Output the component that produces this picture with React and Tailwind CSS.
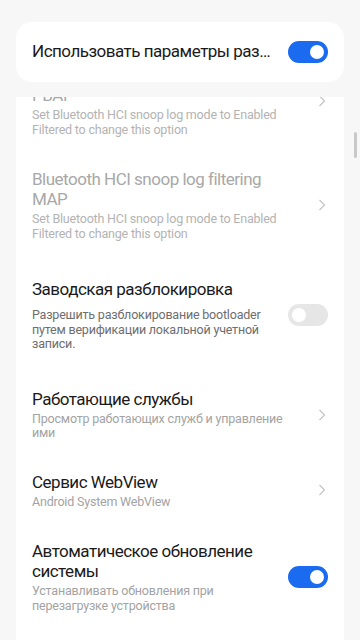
const font = { fontFamily: "Roboto, 'Noto Sans', sans-serif" };

const Chevron = () => (
  <svg width="8" height="12" viewBox="0 0 8 12" className="shrink-0 mr-[2px]">
    <path d="M1.5 1 L6.5 6 L1.5 11" fill="none" stroke="#c4c4c4" strokeWidth="1.2" />
  </svg>
);

const Toggle = ({ on }) => (
  <div
    className={
      "w-10 h-[22px] rounded-full shrink-0 flex items-center px-[4px] " +
      (on ? "bg-[#1a6bf0] justify-end" : "bg-[#e6e6e6] justify-start")
    }
  >
    <div className="w-[14px] h-[14px] rounded-full bg-white" />
  </div>
);

const items = [
  {
    title: "Bluetooth HCI snoop log filtering PBAP",
    sub: "Set Bluetooth HCI snoop log mode to Enabled Filtered to change this option",
    disabled: true,
    right: "chevron",
    pad: "pt-4 pb-4",
  },
  {
    title: "Bluetooth HCI snoop log filtering MAP",
    sub: "Set Bluetooth HCI snoop log mode to Enabled Filtered to change this option",
    disabled: true,
    right: "chevron",
    pad: "pt-4 pb-4",
  },
  {
    title: "Заводская разблокировка",
    sub: "Разрешить разблокирование bootloader путем верификации локальной учетной записи.",
    right: "off",
    dark: true,
    pad: "pt-[22px] pb-[21px]",
    gap: "mt-[9px]",
  },
  {
    title: "Работающие службы",
    sub: "Просмотр работающих служб и управление ими",
    right: "chevron",
    pad: "pt-4 pb-4",
  },
  {
    title: "Сервис WebView",
    sub: "Android System WebView",
    right: "chevron",
    pad: "pt-[15px] pb-4",
  },
  {
    title: "Автоматическое обновление системы",
    sub: "Устанавливать обновления при перезагрузке устройства",
    right: "on",
    pad: "pt-4 pb-4",
  },
];

const Row = ({ item }) => (
  <div className={"flex items-center justify-between px-4 " + item.pad}>
    <div className="w-[254px]">
      <div
        className={
          "text-[17px] leading-[20px] tracking-[-0.5px] " +
          (item.disabled ? "text-[#a8a8a8]" : "text-[#1a1a1a]")
        }
      >
        {item.title}
      </div>
      <div
        className={
          "text-[12.5px] leading-[14.5px] tracking-[-0.2px] " +
          (item.gap || "mt-[3px]") +
          " " +
          (item.disabled
            ? "text-[#b3b3b3]"
            : item.dark
            ? "text-[#6e6e6e]"
            : "text-[#a3a3a3]")
        }
      >
        {item.sub}
      </div>
    </div>
    {item.right === "chevron" && <Chevron />}
    {item.right === "on" && <Toggle on />}
    {item.right === "off" && <Toggle on={false} />}
  </div>
);

export default function App() {
  return (
    <div className="w-[360px] h-[640px] bg-[#f7f7f7] overflow-hidden relative" style={font}>
      <div className="mx-4 mt-[22px] h-[60px] bg-white rounded-2xl flex items-center justify-between px-4">
        <span className="text-[17px] tracking-[-0.5px] text-[#1a1a1a]">Использовать параметры раз…</span>
        <Toggle on />
      </div>
      <div className="mt-[15px] h-[543px] overflow-hidden">
        <div className="mx-4 bg-white -mt-[48px]">
          {items.map((it, i) => (
            <Row key={i} item={it} />
          ))}
          <div className="h-10" />
        </div>
      </div>
      <div className="absolute right-[3px] top-[132px] w-[3px] h-[26px] rounded-full bg-[#c9c9c9]" />
    </div>
  );
}
